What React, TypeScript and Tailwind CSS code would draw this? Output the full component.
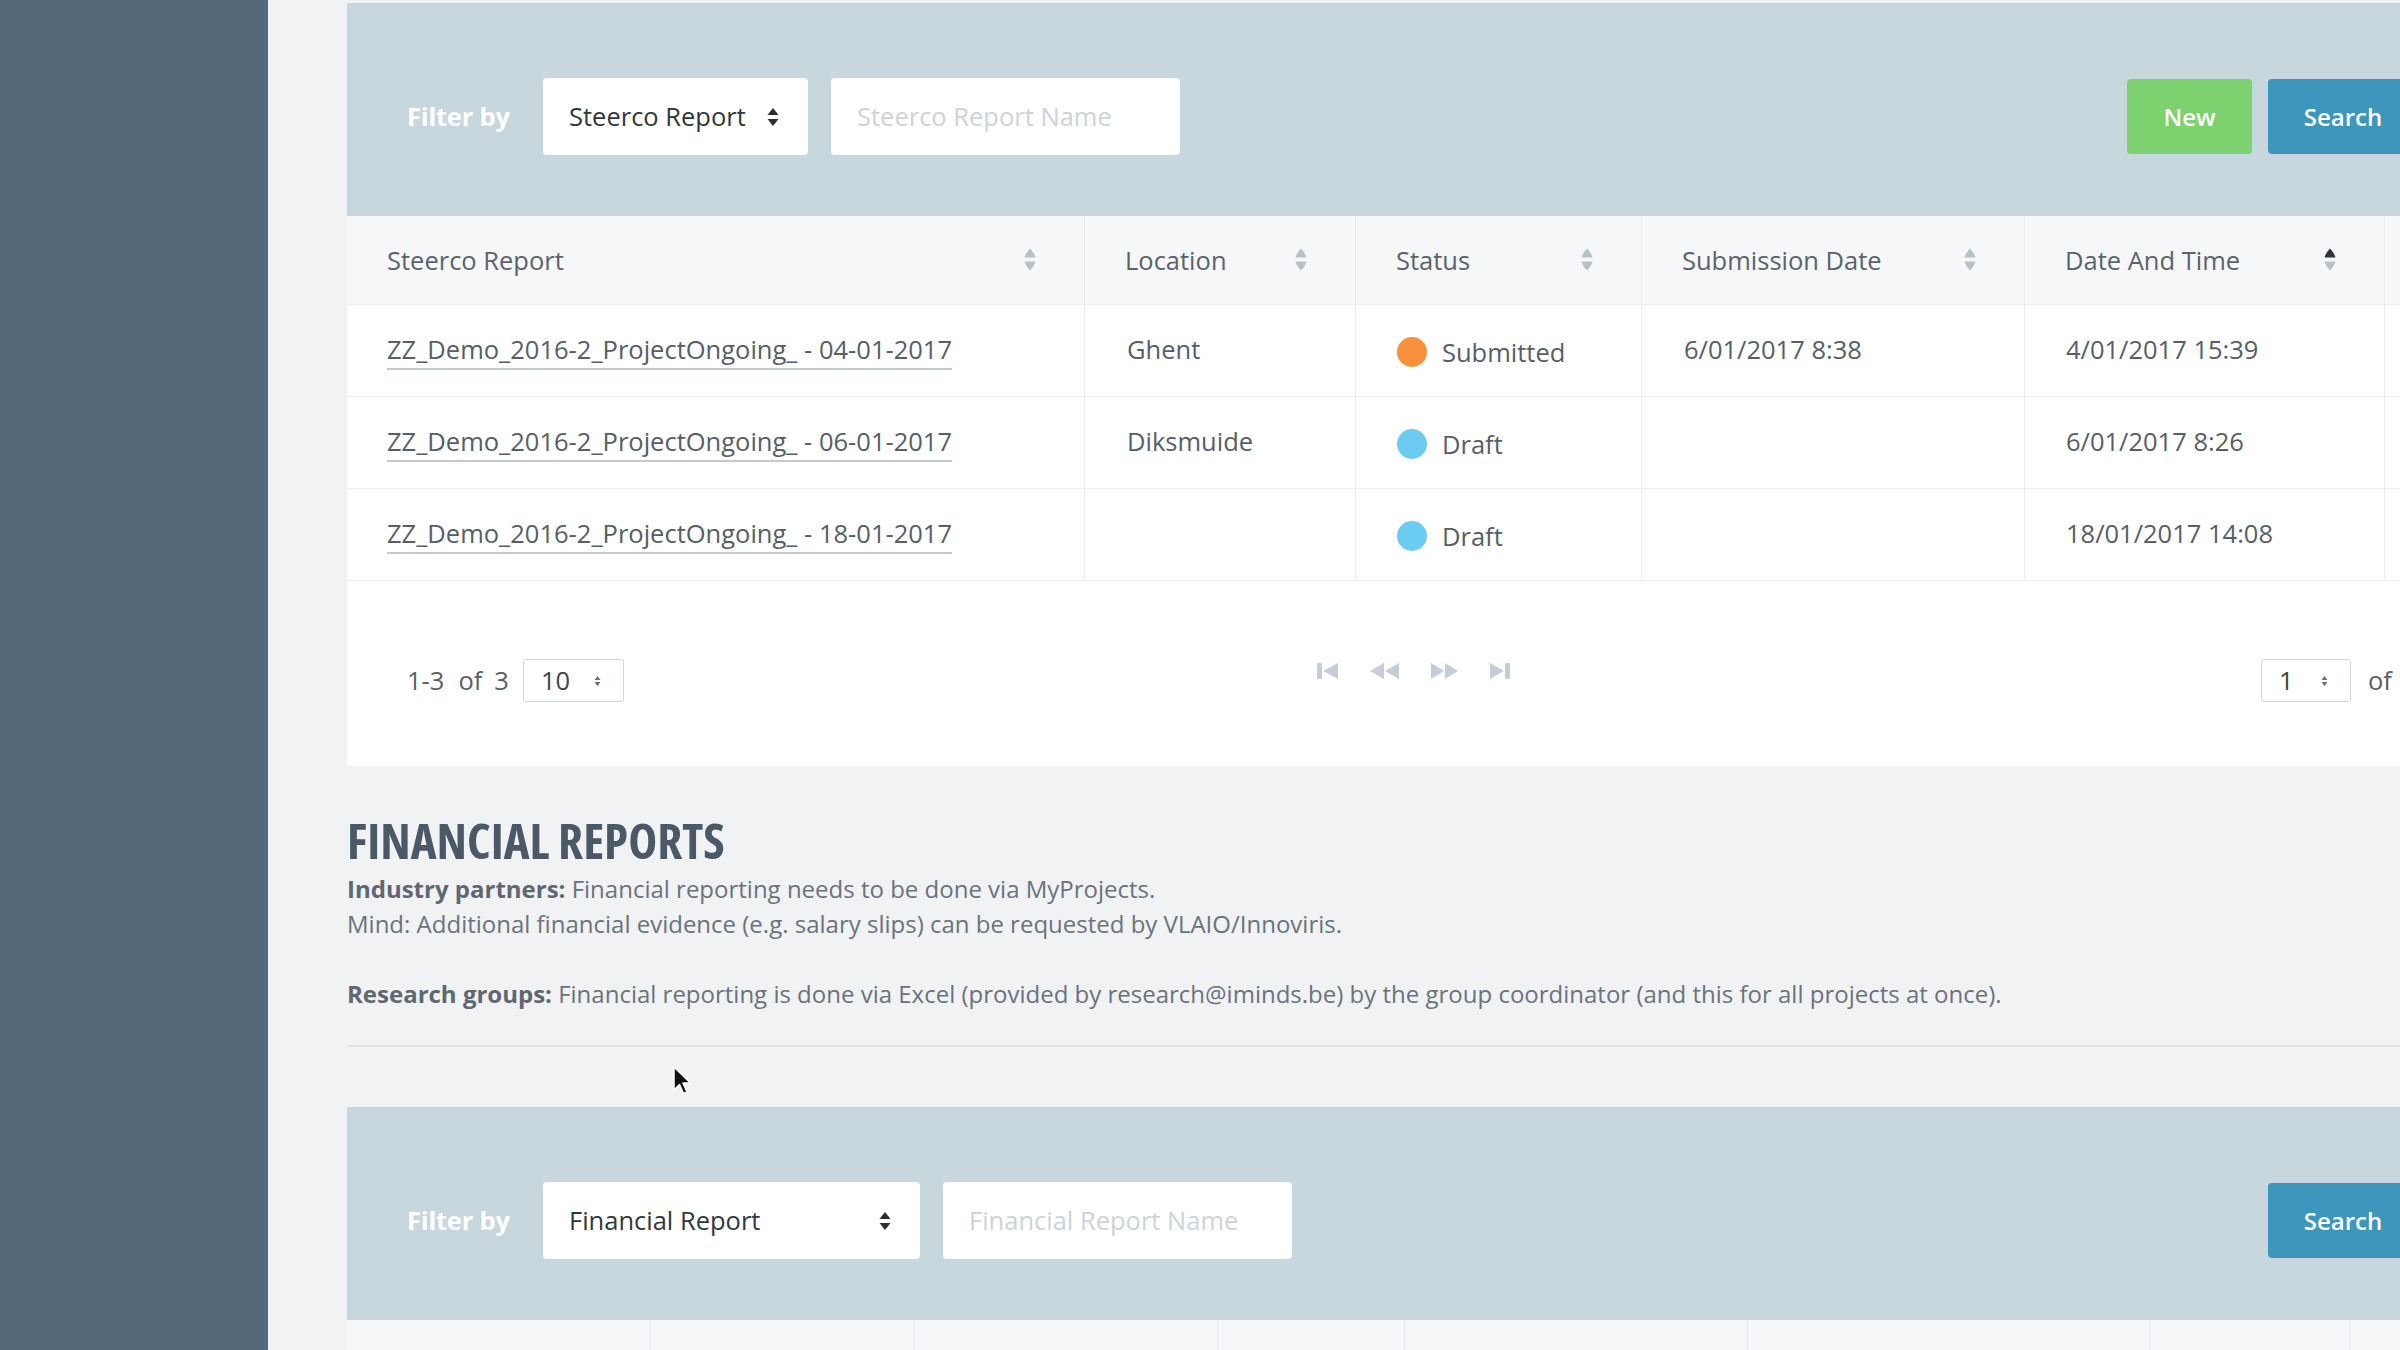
const steercoCols = [
  { label: "Steerco Report", w: "w-[738px]", sorted: false },
  { label: "Location", w: "w-[271px]", sorted: false },
  { label: "Status", w: "w-[286px]", sorted: false },
  { label: "Submission Date", w: "w-[383px]", sorted: false },
  { label: "Date And Time", w: "w-[360px]", sorted: true },
];

const rows = [
  { name: "ZZ_Demo_2016-2_ProjectOngoing_ - 04-01-2017", location: "Ghent", status: "Submitted", submitted: "6/01/2017 8:38", date: "4/01/2017 15:39" },
  { name: "ZZ_Demo_2016-2_ProjectOngoing_ - 06-01-2017", location: "Diksmuide", status: "Draft", submitted: "", date: "6/01/2017 8:26" },
  { name: "ZZ_Demo_2016-2_ProjectOngoing_ - 18-01-2017", location: "", status: "Draft", submitted: "", date: "18/01/2017 14:08" },
];

const financialCols = ["w-[304px]", "w-[264px]", "w-[303px]", "w-[187px]", "w-[343px]", "w-[402px]", "w-[200px]"];

function SortIcon({ active }: { active: boolean }) {
  return (
    <svg width="14" height="26" viewBox="0 0 14 26">
      <path d="M7 1.5 C4.5 4 2.5 7 1.5 10.5 L12.5 10.5 C11.5 7 9.5 4 7 1.5 Z" fill={active ? "#2f3336" : "#b9c1c8"} />
      <path d="M1.5 14.5 L12.5 14.5 C11.5 18 9.5 21 7 23.5 C4.5 21 2.5 18 1.5 14.5 Z" fill="#b9c1c8" />
    </svg>
  );
}

function SelectArrows({ small }: { small?: boolean }) {
  if (small) {
    return (
      <svg width="7" height="12" viewBox="0 0 7 12">
        <path d="M3.5 1 L6.5 5 L0.5 5 Z" fill="#6b7075" />
        <path d="M0.5 7 L6.5 7 L3.5 11 Z" fill="#6b7075" />
      </svg>
    );
  }
  return (
    <svg width="12" height="20" viewBox="0 0 12 20">
      <path d="M6 1 L11.5 8 L0.5 8 Z" fill="#2b2f33" />
      <path d="M0.5 12 L11.5 12 L6 19 Z" fill="#2b2f33" />
    </svg>
  );
}

function FilterBar({ selectLabel, selectW, placeholder, showNew }: { selectLabel: string; selectW: string; placeholder: string; showNew?: boolean }) {
  return (
    <div className="flex h-[213px] items-start bg-[#c8d6dd] pl-[60px] pr-[39px] pt-[75px]">
      <div className="flex h-[77px] items-center">
        <span className="w-[136px] text-[25.5px] font-bold tracking-[-0.2px] text-white">Filter by</span>
        <div className={`flex h-[77px] ${selectW} items-center justify-between rounded-[4px] bg-white pl-[26px] pr-[29px] text-[25.5px] text-[#33373b]`}>
          <span>{selectLabel}</span>
          <SelectArrows />
        </div>
        <div className="ml-[23px] flex h-[77px] w-[349px] items-center rounded-[4px] bg-white pl-[26px] text-[25.5px] text-[#cdd3d8]">
          {placeholder}
        </div>
      </div>
      <div className="ml-auto flex h-[77px] items-center gap-[16px]">
        {showNew && (
          <button className="flex h-[75px] w-[125px] items-center justify-center rounded-[4px] bg-[#7dd26f] text-[24px] font-semibold text-white">
            New
          </button>
        )}
        <button className="flex h-[75px] w-[150px] items-center justify-center rounded-[4px] bg-[#3d97bd] text-[24px] font-semibold text-white">
          Search
        </button>
      </div>
    </div>
  );
}

function StatusDot({ status }: { status: string }) {
  return (
    <div className="flex items-center gap-[15px] pt-[3px]">
      <span className={`h-[30px] w-[30px] rounded-full ${status === "Submitted" ? "bg-[#f8903c]" : "bg-[#6ccbf0]"}`} />
      <span>{status}</span>
    </div>
  );
}

function PagerIcons() {
  return (
    <div className="mb-[6px] flex items-center gap-[32px] text-[#c5ced6]">
      <svg width="21" height="16" viewBox="0 0 21 16">
        <rect x="0" y="0" width="5" height="16" rx="1" fill="currentColor" />
        <path d="M21 0 L21 16 L6 8 Z" fill="currentColor" />
      </svg>
      <svg width="29" height="16" viewBox="0 0 29 16">
        <path d="M14 0 L14 16 L0 8 Z" fill="currentColor" />
        <path d="M29 0 L29 16 L15 8 Z" fill="currentColor" />
      </svg>
      <svg width="27" height="16" viewBox="0 0 27 16">
        <path d="M0 0 L0 16 L13 8 Z" fill="currentColor" />
        <path d="M14 0 L14 16 L27 8 Z" fill="currentColor" />
      </svg>
      <svg width="20" height="16" viewBox="0 0 20 16">
        <path d="M0 0 L0 16 L14 8 Z" fill="currentColor" />
        <rect x="15" y="0" width="5" height="16" rx="1" fill="currentColor" />
      </svg>
    </div>
  );
}

export default function App() {
  return (
    <div className="relative flex h-[1350px] w-[2400px] overflow-hidden bg-[#f1f2f4] font-['Open_Sans',sans-serif] text-[#565e66]">
      {/* Sidebar */}
      <aside className="w-[268px] shrink-0 bg-[#546a7b]" />

      <main className="shrink-0 pl-[79px] pt-[3px]">
        <div className="w-[2110px]">
          {/* Steerco reports */}
          <section className="bg-white">
            <FilterBar selectLabel="Steerco Report" selectW="w-[265px]" placeholder="Steerco Report Name" showNew />

            <div className="flex h-[89px] border-b border-[#eceef0] bg-[#f6f7f8] text-[25.5px] text-[#5b636b]">
              {steercoCols.map((c) => (
                <div key={c.label} className={`${c.w} flex items-center justify-between border-r border-[#eceef0] pl-[40px] pr-[47px]`}>
                  <span>{c.label}</span>
                  <SortIcon active={c.sorted} />
                </div>
              ))}
              <div className="flex-1" />
            </div>

            {rows.map((r) => (
              <div key={r.name} className="flex h-[92px] border-b border-[#eceef0] text-[25.5px] text-[#565e66]">
                <div className="flex w-[738px] items-center border-r border-[#eceef0] pb-[3px] pl-[40px]">
                  <span className="underline decoration-[#c3c9cf] decoration-[1.5px] underline-offset-[9px]">{r.name}</span>
                </div>
                <div className="flex w-[271px] items-center border-r border-[#eceef0] pb-[3px] pl-[42px]">{r.location}</div>
                <div className="flex w-[286px] items-center border-r border-[#eceef0] pl-[41px]">
                  <StatusDot status={r.status} />
                </div>
                <div className="flex w-[383px] items-center border-r border-[#eceef0] pb-[3px] pl-[42px]">{r.submitted}</div>
                <div className="flex w-[360px] items-center border-r border-[#eceef0] pb-[3px] pl-[41px]">{r.date}</div>
                <div className="flex-1" />
              </div>
            ))}

            {/* Pagination */}
            <div className="flex h-[185px] items-center pl-[60px] text-[25.5px] text-[#5a5f64]">
              <div className="mt-[14px] flex w-[910px] items-center">
                <span>1-3</span>
                <span className="ml-[14px]">of</span>
                <span className="ml-[12px]">3</span>
                <div className="ml-[14px] flex h-[43px] w-[101px] items-center justify-between rounded-[3px] border border-[#d3d8dc] pl-[17px] pr-[22px] text-[#3e4347]">
                  <span>10</span>
                  <SelectArrows small />
                </div>
              </div>
              <PagerIcons />
              <div className="ml-[751px] mt-[14px] flex items-center">
                <div className="flex h-[43px] w-[90px] items-center justify-between rounded-[3px] border border-[#d3d8dc] pl-[17px] pr-[22px] text-[#3e4347]">
                  <span>1</span>
                  <SelectArrows small />
                </div>
                <span className="ml-[17px]">of</span>
              </div>
            </div>
          </section>

          {/* Financial reports */}
          <h2 className="mt-[50px] text-[49px] font-bold leading-none text-[#4b5866] font-stretch-condensed">
            FINANCIAL REPORTS
          </h2>
          <div className="mt-[6px] text-[24px] leading-[35px] text-[#6a737c]">
            <p>
              <b className="font-bold text-[#5f6770]">Industry partners:</b> Financial reporting needs to be done via MyProjects.
            </p>
            <p>Mind: Additional financial evidence (e.g. salary slips) can be requested by VLAIO/Innoviris.</p>
            <p className="h-[35px]" />
            <p>
              <b className="font-bold text-[#5f6770]">Research groups:</b> Financial reporting is done via Excel (provided by research@iminds.be) by the group coordinator (and this for all projects at once).
            </p>
          </div>
          <div className="mt-[34px] h-[2px] bg-[#dfe4e8]" />

          <section className="mt-[60px]">
            <FilterBar selectLabel="Financial Report" selectW="w-[377px]" placeholder="Financial Report Name" />
            <div className="flex h-[40px] bg-[#f6f7f8]">
              {financialCols.map((w, i) => (
                <div key={i} className={`${w} border-r border-[#e6e9ec]`} />
              ))}
              <div className="flex-1" />
            </div>
          </section>
        </div>
      </main>

      {/* Mouse cursor */}
      <svg className="absolute left-[673px] top-[1066px]" width="20" height="30" viewBox="0 0 20 30">
        <path d="M1 1 L1 24 L6.5 18.5 L10.5 27.5 L14 26 L10 17 L17.5 17 Z" fill="#111" stroke="#fff" strokeWidth="1.5" strokeLinejoin="round" />
      </svg>
    </div>
  );
}
